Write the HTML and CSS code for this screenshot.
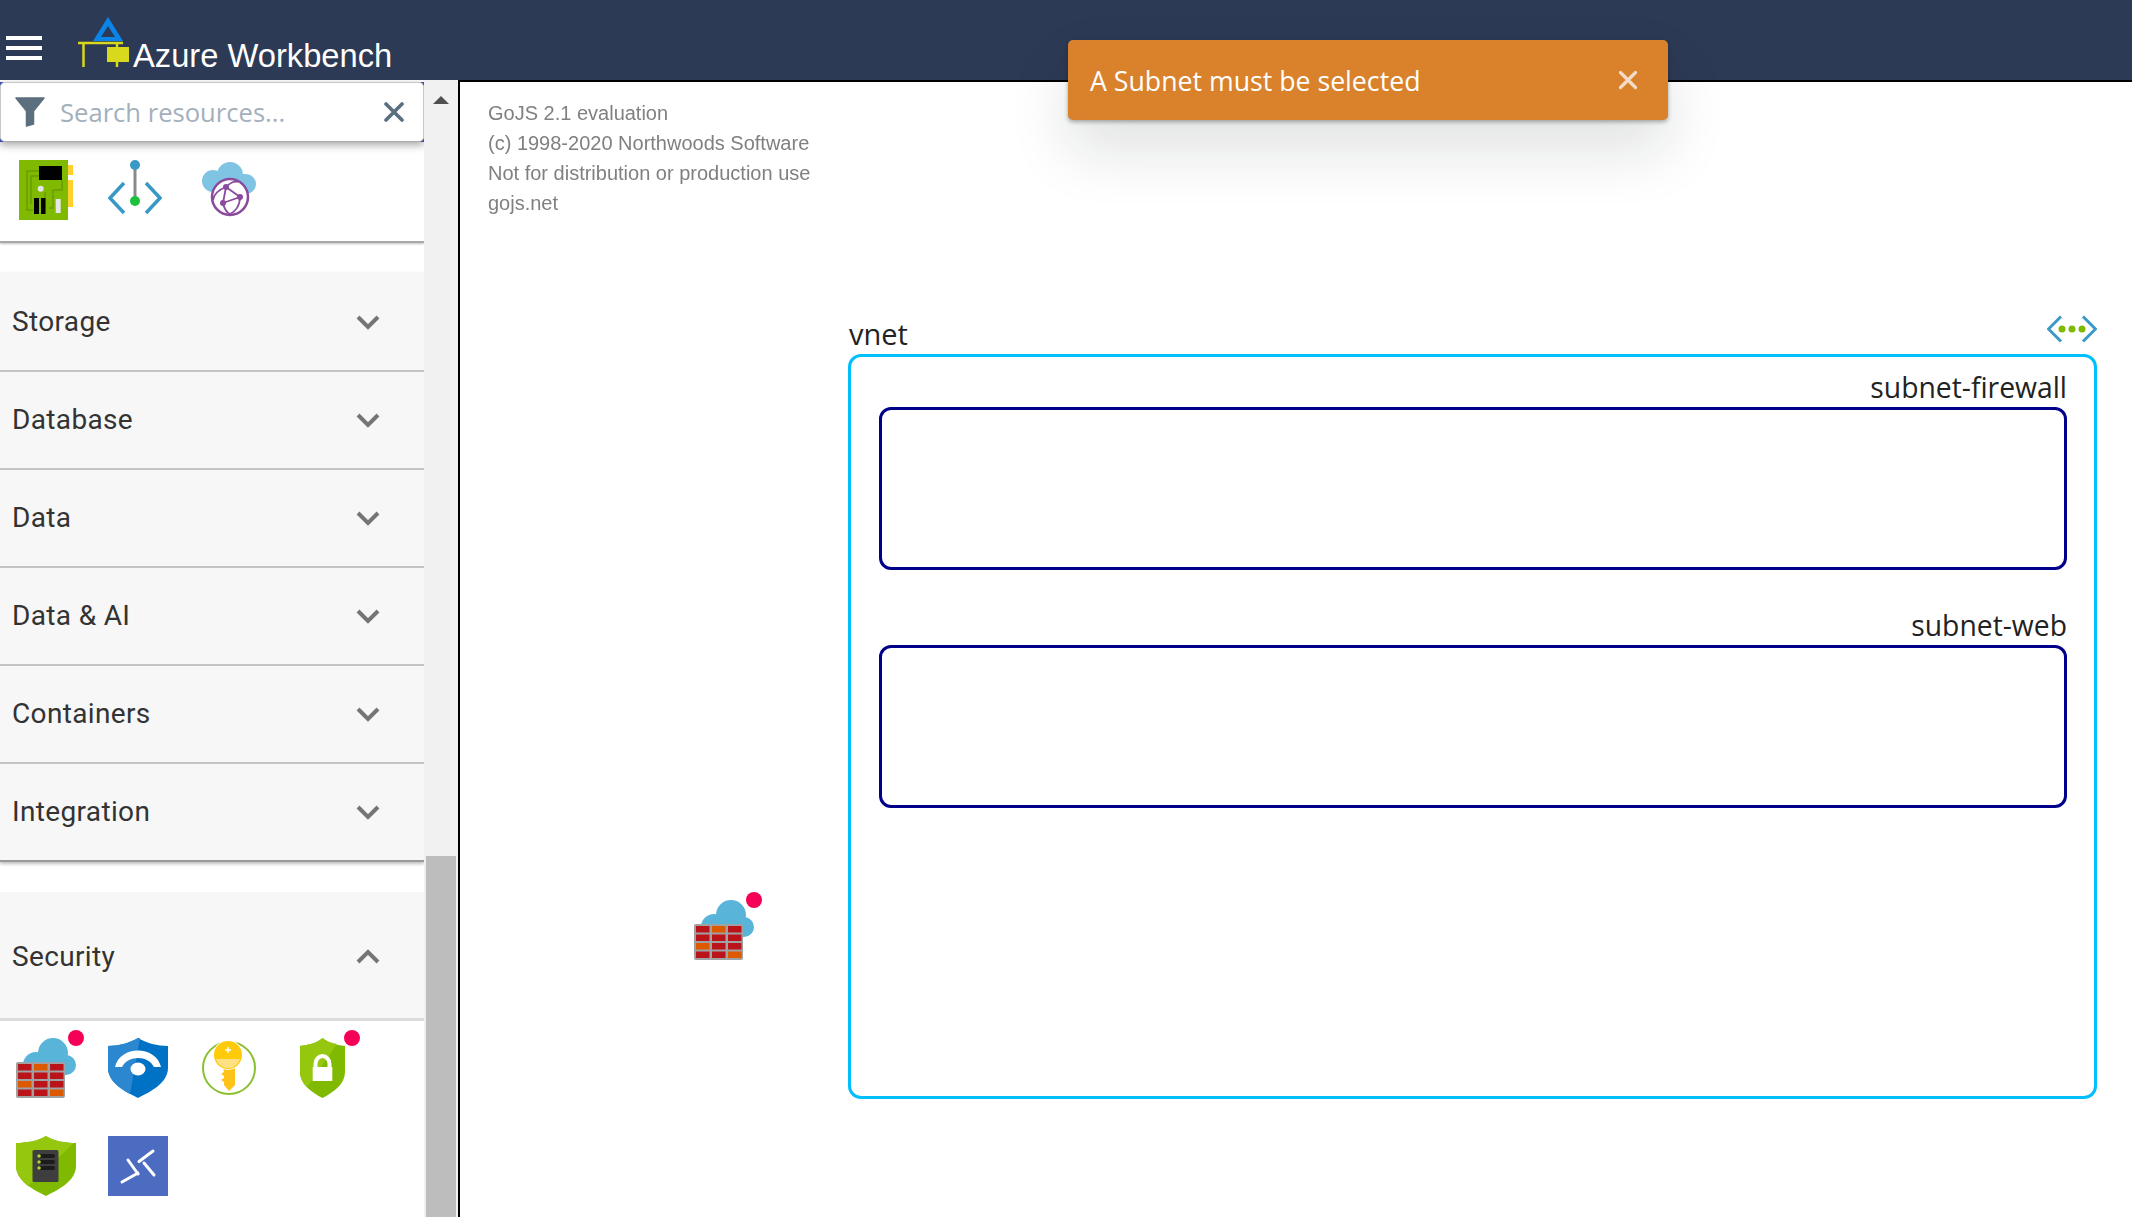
FILE: index.html
```html
<!DOCTYPE html>
<html lang="en">
<head>
<meta charset="utf-8">
<title>Azure Workbench</title>
<link rel="stylesheet" href="styles.css">
</head>
<body>
<svg class="defs" width="0" height="0" aria-hidden="true">
  <symbol id="firewall" viewBox="0 0 60 60">
    <g fill="#59b4d9"><circle cx="37" cy="15" r="15"/><circle cx="20" cy="27" r="13"/><circle cx="50" cy="27" r="10"/><rect x="20" y="15" width="30" height="22"/></g>
    <rect x="0" y="24" width="49" height="36" rx="2" fill="#a0a1a2"/>
    <g fill="#ba141a">
      <rect x="2" y="26" width="13.5" height="6.5"/><rect x="34" y="26" width="13.5" height="6.5"/>
      <rect x="2" y="34.5" width="13.5" height="6.5"/><rect x="18" y="34.5" width="13.5" height="6.5"/><rect x="34" y="34.5" width="13.5" height="6.5"/>
      <rect x="18" y="43" width="13.5" height="6.5"/><rect x="34" y="43" width="13.5" height="6.5"/>
      <rect x="2" y="51.5" width="13.5" height="6.5"/><rect x="18" y="51.5" width="13.5" height="6.5"/>
    </g>
    <g fill="#dd5900">
      <rect x="18" y="26" width="13.5" height="6.5"/><rect x="2" y="43" width="13.5" height="6.5"/><rect x="34" y="51.5" width="13.5" height="6.5"/>
    </g>
  </symbol>
</svg>

<div class="app">
  <header class="topbar">
    <div class="burger"><span></span><span></span><span></span></div>
    <svg class="logo" width="52" height="50" viewBox="0 0 52 50">
      <path d="M30 0 L45 24 H15 Z M30 9 L23 20 H37 Z" fill="#0a84e8" fill-rule="evenodd"/>
      <path d="M22 20 H38 L40 24 H20 Z" fill="#0a84e8"/>
      <path d="M0 26 H45 M5.500 26 V50 M39 26 V50" stroke="#d8d81c" stroke-width="2.500" fill="none"/>
      <rect x="29" y="30" width="22" height="15" fill="#d8d81c"/>
    </svg>
    <div class="brand">Azure Workbench</div>
  </header>

  <div class="main">
    <aside class="sidebar">
      <div class="searchwrap">
        <div class="search">
          <svg class="funnel" width="30" height="30" viewBox="0 0 30 30"><path d="M1 1 H29 L18.500 14 V27 L11.500 29 V14 Z" fill="#5c6f7e" stroke="#5c6f7e" stroke-linejoin="round" stroke-width="1.500"/></svg>
          <span class="placeholder">Search resources...</span>
          <svg class="clear" width="20" height="20" viewBox="0 0 20 20"><path d="M2 2 L18 18 M18 2 L2 18" stroke="#5c6f7e" stroke-width="3.600" stroke-linecap="round"/></svg>
        </div>
      </div>

      <div class="iconrow">
        <svg class="ico" width="54" height="60" viewBox="0 0 54 60">
          <rect x="49" y="5" width="5" height="10" fill="#ffd02e"/><rect x="49" y="20" width="5" height="27" fill="#ffd02e"/>
          <rect width="49" height="60" fill="#7fba00"/>
          <path d="M20 11 H8 V50 H14 M20 16 H12 V44 M43 20 V30 H34 V48 H30 M26 32 V50" stroke="#6a9c00" stroke-width="1.500" fill="none"/>
          <rect x="20" y="6" width="23" height="14" fill="#000"/>
          <circle cx="21.700" cy="28.700" r="3" fill="#e6e6e6"/>
          <rect x="15" y="38" width="5" height="16" fill="#000"/><rect x="22" y="38" width="4.500" height="16" fill="#000"/>
          <rect x="36.700" y="39" width="5" height="14" fill="#e6e6e6"/>
        </svg>
        <svg class="ico" width="54" height="56" viewBox="0 0 54 56">
          <path d="M27 5 V41" stroke="#8a8a8a" stroke-width="3"/>
          <circle cx="27" cy="5" r="5" fill="#3999c6"/><circle cx="27" cy="41" r="5" fill="#1ec13b"/>
          <path d="M16 23 L2 38 L16 53 M38 23 L52 38 L38 53" stroke="#3999c6" stroke-width="3.500" fill="none"/>
        </svg>
        <svg class="ico ico-far" width="54" height="56" viewBox="0 0 54 56">
          <g fill="#7fc4e3"><circle cx="28" cy="13" r="13"/><circle cx="11" cy="19" r="11"/><circle cx="44" cy="22" r="10"/><rect x="10" y="12" width="34" height="19"/></g>
          <circle cx="28" cy="35" r="18" fill="#fff" stroke="#8a4b9e" stroke-width="2.500"/>
          <path d="M24 25 L38 35 L21 41 L24 25 M24 25 C16 28 12 32 11 38 M38 35 C38 44 33 50 28 52 M21 41 C22 46 24 50 28 52 M24 25 C28 21 33 19 36 20" stroke="#8a4b9e" stroke-width="1.800" fill="none"/>
          <g fill="#8a4b9e"><circle cx="24" cy="25" r="3"/><circle cx="38" cy="35" r="3"/><circle cx="21" cy="41" r="3"/></g>
        </svg>
      </div>

      <div class="acc-group">
        <div class="acc"><span class="acc-title">Storage</span><svg class="chev" width="26" height="16" viewBox="0 0 26 16"><path d="M3 3 L13 13 L23 3" /></svg></div>
        <div class="acc"><span class="acc-title">Database</span><svg class="chev" width="26" height="16" viewBox="0 0 26 16"><path d="M3 3 L13 13 L23 3" /></svg></div>
        <div class="acc"><span class="acc-title">Data</span><svg class="chev" width="26" height="16" viewBox="0 0 26 16"><path d="M3 3 L13 13 L23 3" /></svg></div>
        <div class="acc"><span class="acc-title">Data &amp; AI</span><svg class="chev" width="26" height="16" viewBox="0 0 26 16"><path d="M3 3 L13 13 L23 3" /></svg></div>
        <div class="acc"><span class="acc-title">Containers</span><svg class="chev" width="26" height="16" viewBox="0 0 26 16"><path d="M3 3 L13 13 L23 3" /></svg></div>
        <div class="acc acc-last"><span class="acc-title">Integration</span><svg class="chev" width="26" height="16" viewBox="0 0 26 16"><path d="M3 3 L13 13 L23 3" /></svg></div>
      </div>

      <div class="acc acc-open"><span class="acc-title">Security</span><svg class="chev" width="26" height="16" viewBox="0 0 26 16"><path d="M3 13 L13 3 L23 13" /></svg></div>

      <div class="secgrid">
        <div class="cell">
          <svg width="60" height="60"><use href="#firewall"/></svg>
          <i class="badge"></i>
        </div>
        <div class="cell">
          <svg width="60" height="60" viewBox="0 0 60 60">
            <path d="M30 0 C38 5 50 8 60 8 V30 C60 45 42 54 30 60 C18 54 0 45 0 30 V8 C10 8 22 5 30 0 Z" fill="#0072c6"/>
            <path d="M30 0 C22 5 10 8 0 8 V30 C0 42 11 50 22 56 L32 0 Z" fill="#2b88d0"/>
            <path d="M7 29 C12 7 48 7 53 29 L46 29 C40 17 20 17 14 29 Z" fill="#fff"/>
            <ellipse cx="30" cy="31" rx="7.500" ry="6.500" fill="#fff"/>
          </svg>
        </div>
        <div class="cell">
          <svg width="60" height="60" viewBox="0 0 60 60">
            <circle cx="29" cy="30" r="26" fill="none" stroke="#8cbf2f" stroke-width="2"/>
            <path d="M22 26 H35 V47 L29 53 L24 47 V44 L21 42 L24 40 V38 L21 36 L24 34 Z" fill="#ffc21a"/>
            <circle cx="28" cy="17" r="15" fill="#fff"/>
            <circle cx="28" cy="17" r="14" fill="#ffca0a"/>
            <path d="M16 21 H40 C38 27 33 30 28 30 C23 30 18 27 16 21 Z" fill="#ffe082"/>
            <path d="M28 9 V15 M25 12 H31" stroke="#fff" stroke-width="1.500"/>
          </svg>
        </div>
        <div class="cell">
          <svg width="60" height="60" viewBox="0 0 60 60">
            <path d="M30.500 0 C36 5 44 7 53 8 V34 C53 46 42 54 30.500 60 C19 54 8 46 8 34 V8 C17 7 25 5 30.500 0 Z" fill="#7fba00"/>
            <path d="M30.500 0 C25 5 17 7 8 8 V34 C8 40 11 45 15 49 L45 6 C39 5 34 3 30.500 0 Z" fill="#95c70f"/>
            <path d="M23.500 30 V26 A7 8 0 0 1 37.500 26 V30" fill="none" stroke="#fff" stroke-width="4"/>
            <rect x="20.700" y="29" width="19.600" height="14" fill="#fff"/>
          </svg>
          <i class="badge"></i>
        </div>
        <div class="cell">
          <svg width="60" height="60" viewBox="0 0 60 60">
            <path d="M30 0 C38 5 50 7 60 7 V30 C60 45 42 54 30 60 C18 54 0 45 0 30 V7 C10 7 22 5 30 0 Z" fill="#7fba00"/>
            <path d="M30 0 C22 5 10 7 0 7 V30 C0 38 6 45 12 50 L58 7 C48 7 38 5 30 0 Z" fill="#95c70f"/>
            <rect x="16.500" y="14" width="26" height="32" rx="1.500" fill="#3e3e3e"/>
            <g fill="#1c1c1c"><rect x="21" y="18" width="18" height="4" rx="2"/><rect x="21" y="24" width="18" height="4" rx="2"/><rect x="21" y="30" width="18" height="4" rx="2"/></g>
            <g fill="#b8d432"><circle cx="23" cy="20" r="1.800"/><circle cx="23" cy="26" r="1.800"/><circle cx="23" cy="32" r="1.800"/></g>
          </svg>
        </div>
        <div class="cell">
          <svg width="60" height="60" viewBox="0 0 60 60">
            <rect width="60" height="60" fill="#4b6cc1"/>
            <path d="M14 46 L30 37 M31 25.500 L45 15 M20 24 L30 38 M36 27 L46 39" stroke="#fff" stroke-width="3" stroke-linecap="round" fill="none"/>
          </svg>
        </div>
      </div>
    </aside>

    <div class="scrollbar">
      <div class="scroll-up"></div>
      <div class="scroll-thumb"></div>
    </div>

    <section class="canvas">
      <div class="gojs">
        <div>GoJS 2.1 evaluation</div>
        <div>(c) 1998-2020 Northwoods Software</div>
        <div>Not for distribution or production use</div>
        <div>gojs.net</div>
      </div>

      <div class="node-fw">
        <svg width="60" height="60"><use href="#firewall"/></svg>
        <i class="badge"></i>
      </div>

      <div class="vnet-label">vnet</div>
      <svg class="vnet-icon" width="50" height="28" viewBox="0 0 50 28">
        <path d="M14 1.500 L1.500 14 L14 26.500 M36 1.500 L48.500 14 L36 26.500" stroke="#3999c6" stroke-width="3" fill="none"/>
        <g fill="#7fba00"><circle cx="15" cy="14" r="3.500"/><circle cx="25" cy="14" r="3.500"/><circle cx="35" cy="14" r="3.500"/></g>
      </svg>
      <div class="vnet">
        <div class="subnet-label">subnet-firewall</div>
        <div class="subnet"></div>
        <div class="subnet-label subnet-label-next">subnet-web</div>
        <div class="subnet"></div>
      </div>
    </section>
  </div>

  <div class="toast">
    <span class="toast-text">A Subnet must be selected</span>
    <svg class="toast-x" width="20" height="20" viewBox="0 0 20 20"><path d="M2.500 2.500 L17.500 17.500 M17.500 2.500 L2.500 17.500" stroke="#f3dcc8" stroke-width="3.200" stroke-linecap="round"/></svg>
  </div>
</div>
</body>
</html>
```

FILE: styles.css
```css
* { box-sizing: border-box; }
html, body { margin: 0; padding: 0; height: 100%; overflow: hidden; background: #fff; }
.defs { position: absolute; }

.app { position: relative; display: flex; flex-direction: column; width: 2132px; height: 1217px; font-family: Roboto, sans-serif; }

.topbar { display: flex; align-items: flex-start; height: 80px; flex: none; background: #2d3a55; color: #fff; }
.burger { display: flex; flex-direction: column; gap: 6px; width: 36px; margin: 36px 0 0 6px; }
.burger span { display: block; height: 4px; background: #fff; }
.logo { margin: 17px 0 0 36px; }
.brand { margin: 36px 0 0 3px; font: 32.700px/40px "Liberation Sans", Arial, sans-serif; }

.main { display: flex; flex: 1; min-height: 0; }

.sidebar { width: 424px; flex: none; overflow: hidden; background: #fff; }
.searchwrap { margin-top: 2px; height: 60px; background: #3949ab; box-shadow: 0 3px 8px rgba(0,0,0,.35); position: relative; }
.search { display: flex; align-items: center; height: 60px; padding: 0 19px 0 14px; background: #fff; border-radius: 5px; border: 1px solid #c8c8c8; border-bottom-color: #aaa; }
.funnel { flex: none; }
.placeholder { flex: 1; margin-left: 15px; font: 25.600px "Open Sans", sans-serif; color: #a3b0bc; white-space: nowrap; }
.clear { flex: none; }

.iconrow { display: flex; gap: 35px; align-items: flex-start; height: 101px; padding: 18px 0 0 19px; border-bottom: 2px solid #a9a9a9; box-shadow: 0 1px 2px rgba(0,0,0,.25); }
.ico { flex: none; }
.ico-far { margin: 2px 0 0 5px; }

.acc-group { margin-top: 29px; box-shadow: 0 2px 3px rgba(0,0,0,.25); }
.acc { display: flex; align-items: center; justify-content: space-between; height: 98px; padding: 0 43px 0 12px; background: #f7f7f7; border-bottom: 2px solid #c4c4c4; color: #333; font-size: 28px; letter-spacing: .35px; }
.acc:first-child { height: 100px; padding-top: 2px; }
.acc-title { margin-bottom: 2px; }
.acc-last { border-bottom-color: #9a9a9a; }
.acc-open { height: 129px; margin-top: 30px; padding-top: 4px; border-bottom: 3px solid #dcdcdc; }
.chev { flex: none; fill: none; stroke: #757575; stroke-width: 4; }

.secgrid { display: grid; grid-template-columns: repeat(4, 60px); column-gap: 32px; row-gap: 38px; padding: 17px 0 0 16px; background: #fff; }
.cell { position: relative; width: 60px; height: 60px; }
.cell svg, .node-fw svg { display: block; }
.badge { position: absolute; top: -8px; right: -8px; width: 16px; height: 16px; border-radius: 50%; background: #f50057; }

.scrollbar { position: relative; width: 34px; flex: none; background: #f1f1f1; display: flex; flex-direction: column; }
.scroll-up { width: 0; height: 0; margin: 16px 0 0 9px; border-left: 8px solid transparent; border-right: 8px solid transparent; border-bottom: 8px solid #505050; }
.scroll-thumb { position: absolute; left: 2px; right: 2px; bottom: 0; height: 361px; background: #bdbdbd; }

.canvas { position: relative; flex: 1; background: #fff; border-top: 2px solid #000; border-left: 2px solid #000; }
.gojs { position: absolute; left: 28px; top: 16px; font: 20px/30px "Liberation Sans", Arial, sans-serif; color: #808080; filter: blur(.7px); white-space: nowrap; }
.node-fw { position: absolute; left: 234px; top: 818px; width: 60px; height: 60px; }
.vnet-label { position: absolute; left: 389px; top: 232px; font: 29px/40px "Open Sans", sans-serif; color: #222; }
.vnet-icon { position: absolute; left: 1587px; top: 233px; }
.vnet { position: absolute; left: 388px; top: 272px; width: 1249px; height: 745px; padding: 13px 27px 0 28px; border: 3px solid #00bfff; border-radius: 13px; }
.subnet-label { height: 37px; font: 28.300px/35px "Open Sans", sans-serif; color: #222; text-align: right; }
.subnet-label-next { margin-top: 38px; }
.subnet { height: 163px; border: 3px solid #00008b; border-radius: 12px; }

.toast { position: absolute; left: 1068px; top: 40px; width: 600px; height: 80px; display: flex; align-items: center; justify-content: space-between; padding: 0 30px 0 22px; background: #d9822b; border-radius: 5px; box-shadow: 0 2px 4px rgba(16,22,26,.35), 0 30px 60px rgba(16,22,26,.13); }
.toast-text { font: 26.700px "Open Sans", sans-serif; color: #fff; white-space: nowrap; }
.toast-x { flex: none; }
```
